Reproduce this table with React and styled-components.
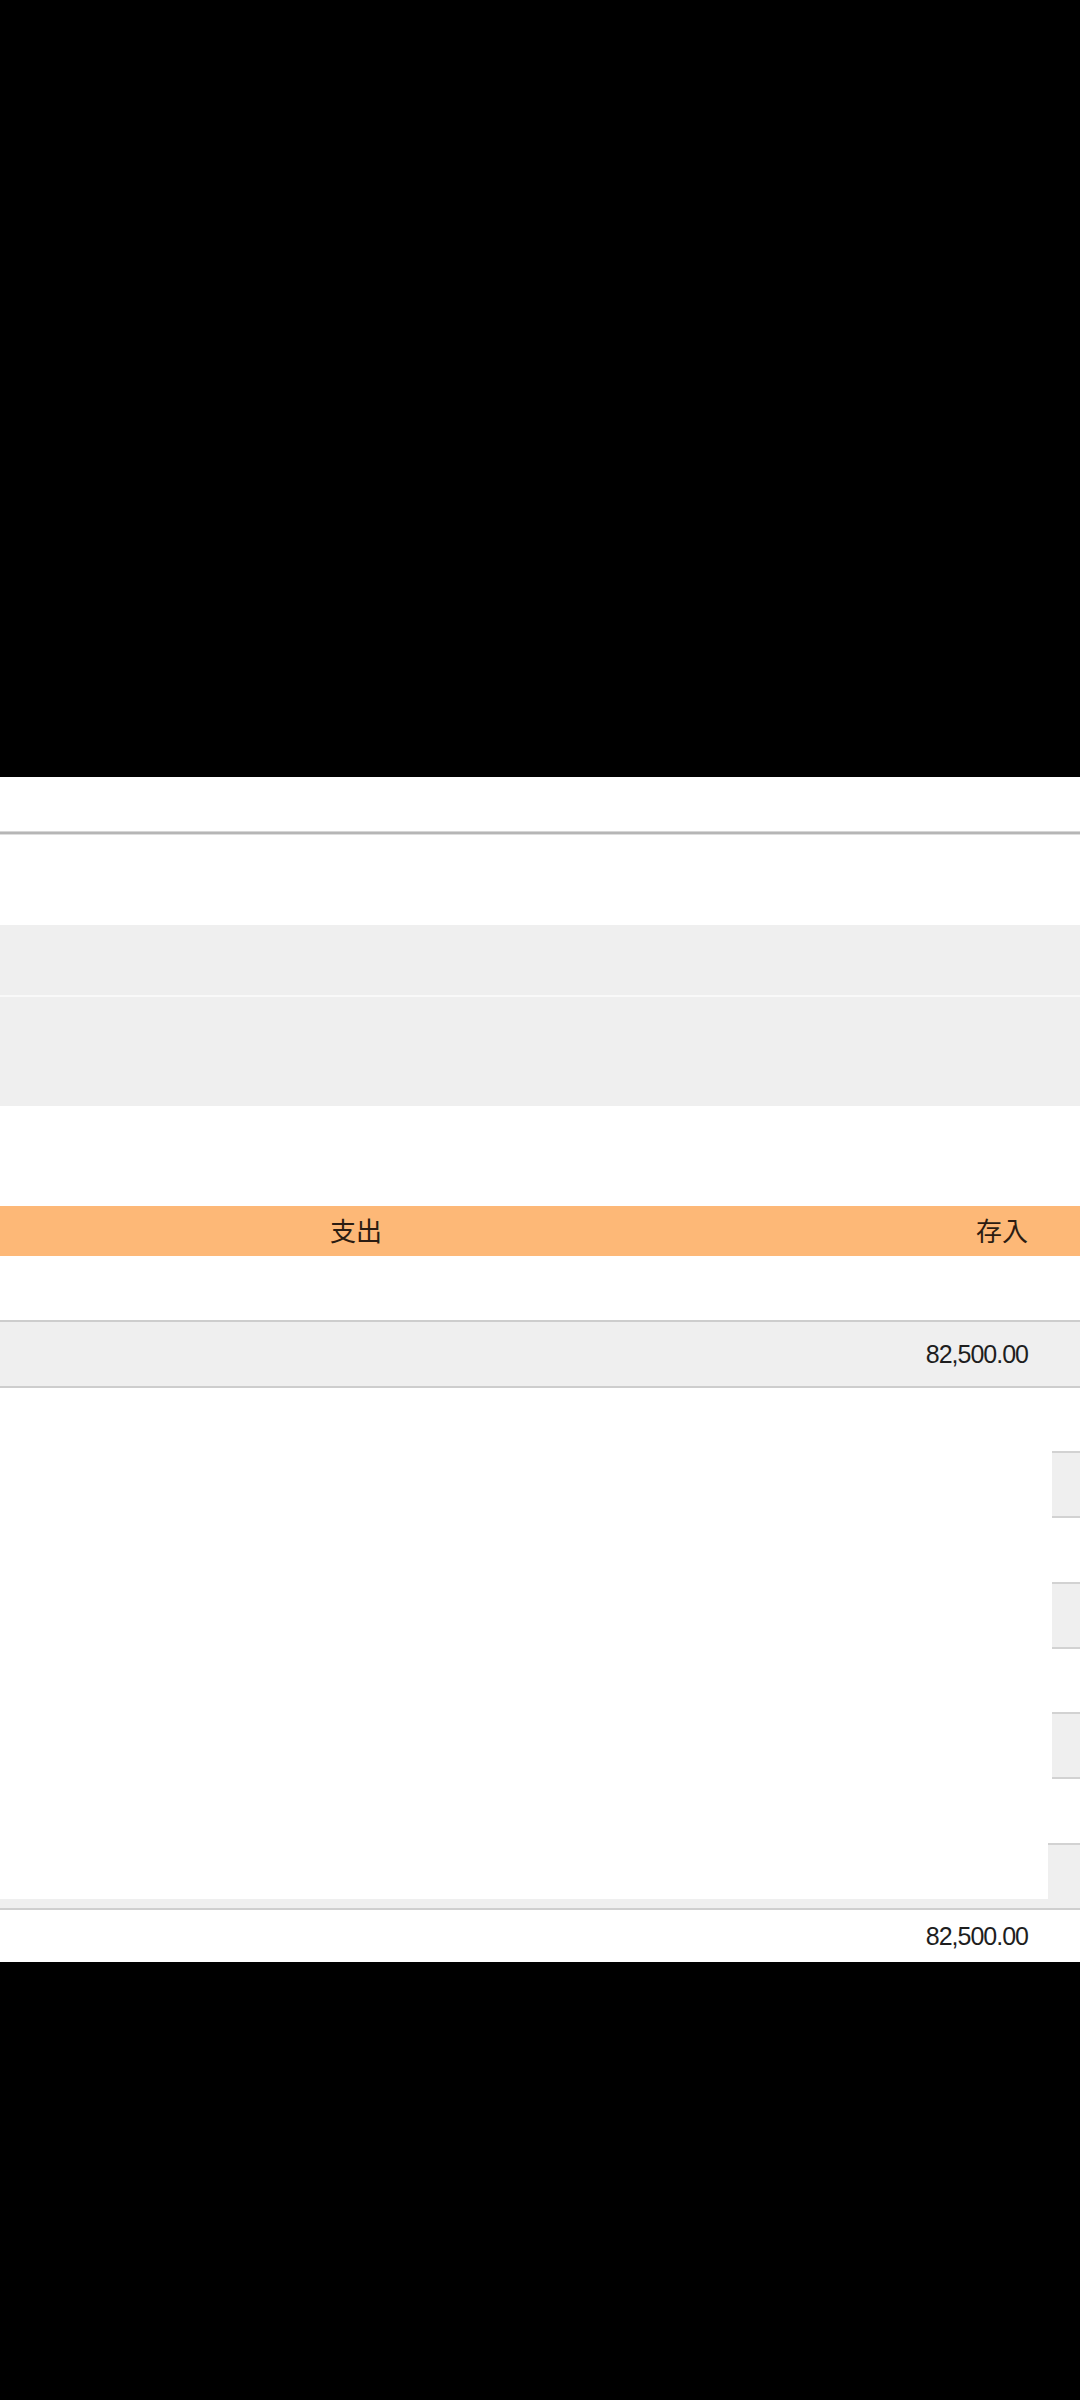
import React from 'react';
import styled, { createGlobalStyle } from 'styled-components';

const GlobalStyle = createGlobalStyle`
    html, body {
        margin: 0;
        padding: 0;
        background: #000;
    }
    body {
        font-family: "Liberation Sans", "Noto Sans CJK TC", sans-serif;
    }
`;

const sideBoxes = [
    { top: 63, height: 67, left: 1052 },
    { top: 64, height: 67, left: 1052 },
    { top: 63, height: 67, left: 1052 },
    { top: 64, height: 56, left: 1048 },
];

const App = () => {
    return (
        <>
            <GlobalStyle />
            <Screen>
                <Sheet>
                    <TopSpace />
                    <Divider />
                    <Spacer h={90} />
                    <GrayBlock h={70} />
                    <Seam />
                    <GrayBlock h={109} />
                    <Spacer h={100} />
                    <HeaderBar>
                        <HeadCell center>支出</HeadCell>
                        <HeadCell>存入</HeadCell>
                    </HeaderBar>
                    <Spacer h={64} />
                    <TotalRow>
                        <Amount>82,500.00</Amount>
                    </TotalRow>
                    <ListArea>
                        { sideBoxes.map((b, i) => (
                            <SideBox key={ i } mt={ b.top } h={ b.height } w={ 1080 - b.left } last={ i === sideBoxes.length - 1 } />
                        )) }
                    </ListArea>
                    <BottomStrip />
                    <FooterRow>
                        <Amount>82,500.00</Amount>
                    </FooterRow>
                </Sheet>
            </Screen>
        </>
    );
};

export default App;


const Screen = styled.div`
    width: 1080px;
    min-height: 2400px;
    background: #000;
    padding-top: 777px;
    box-sizing: border-box;
`;
const Sheet = styled.div`
    width: 100%;
    background: #fff;
    display: flex;
    flex-direction: column;
`;
const TopSpace = styled.div`
    height: 54px;
`;
const Divider = styled.div`
    height: 4px;
    background: #b6b6b6;
    border-top: 1px solid #d6d6d6;
    border-bottom: 1px solid #dedede;
    box-sizing: border-box;
`;
const Spacer = styled.div`
    height: ${({ h }) => h}px;
`;
const GrayBlock = styled.div`
    height: ${({ h }) => h}px;
    background: #efefef;
`;
const Seam = styled.div`
    height: 2px;
    background: #f9f9f9;
`;
const HeaderBar = styled.div`
    height: 50px;
    background: #fdb877;
    display: grid;
    grid-template-columns: 712px 1fr;
    align-items: center;
    padding-right: 52px;
    box-sizing: border-box;
`;
const HeadCell = styled.div`
    font-family: "Noto Sans CJK TC", sans-serif;
    font-size: 26px;
    color: #2b1c12;
    text-align: ${({ center }) => center ? "center" : "right"};
    line-height: 1;
    margin-top: -2px;
`;
const TotalRow = styled.div`
    height: 68px;
    background: #efefef;
    border-top: 2px solid #cdcdcd;
    border-bottom: 2px solid #cdcdcd;
    box-sizing: border-box;
    display: flex;
    align-items: center;
    justify-content: flex-end;
    padding-right: 52px;
`;
const Amount = styled.div`
    font-family: "Liberation Sans", sans-serif;
    font-size: 25px;
    color: #1e1e1e;
    letter-spacing: -1px;
`;
const ListArea = styled.div`
    height: 511px;
    display: flex;
    flex-direction: column;
    align-items: flex-end;
`;
const SideBox = styled.div`
    margin-top: ${({ mt }) => mt}px;
    width: ${({ w }) => w}px;
    height: ${({ h }) => h}px;
    background: #efefef;
    border-top: 2px solid #d2d2d2;
    border-bottom: ${({ last }) => last ? "0" : "2px solid #d2d2d2"};
    box-sizing: border-box;
    flex-shrink: 0;
`;
const BottomStrip = styled.div`
    height: 11px;
    background: #efefef;
    border-bottom: 2px solid #cfcfcf;
    box-sizing: border-box;
`;
const FooterRow = styled.div`
    height: 52px;
    display: flex;
    align-items: center;
    justify-content: flex-end;
    padding-right: 52px;
`;
